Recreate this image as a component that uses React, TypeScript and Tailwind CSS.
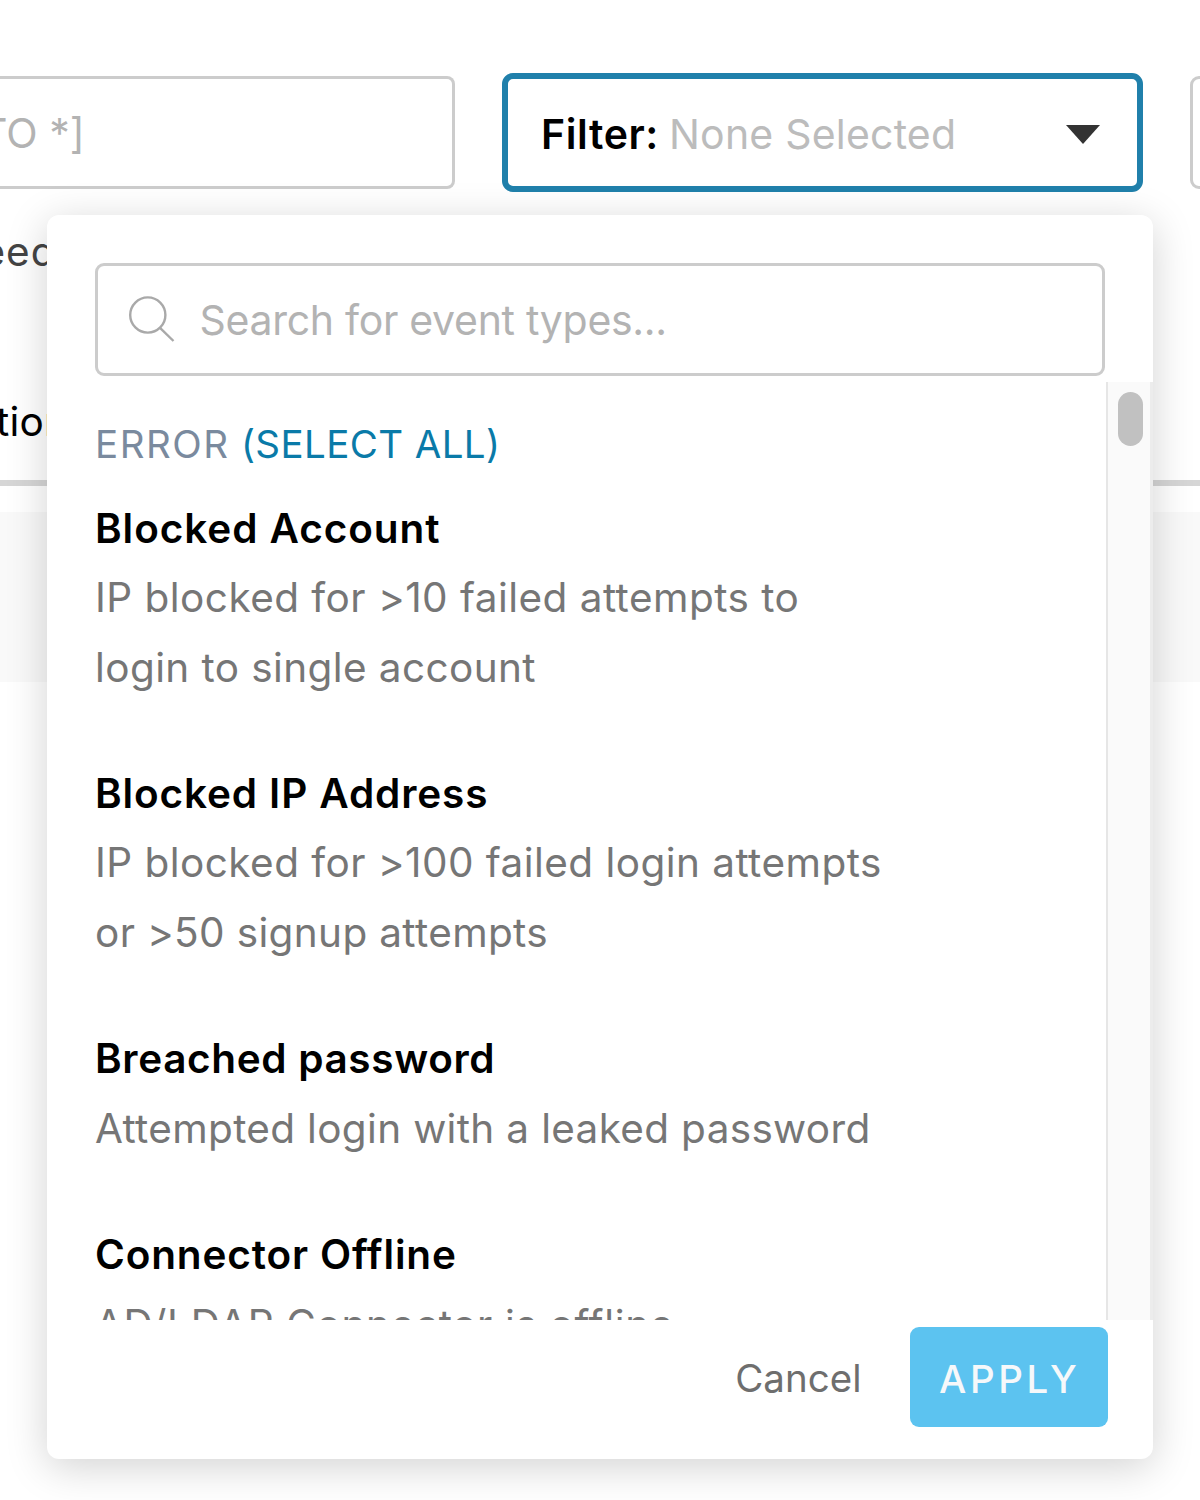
import React from "react";

type EventType = {
  name: string;
  nameTracking: string;
  lines: { text: string; tracking: string }[];
};

const EVENT_TYPES: EventType[] = [
  {
    name: "Blocked Account",
    nameTracking: "tracking-[0.92px]",
    lines: [
      { text: "IP blocked for >10 failed attempts to", tracking: "tracking-[0.46px]" },
      { text: "login to single account", tracking: "tracking-[0.4px]" },
    ],
  },
  {
    name: "Blocked IP Address",
    nameTracking: "tracking-[0.87px]",
    lines: [
      { text: "IP blocked for >100 failed login attempts", tracking: "tracking-[0.45px]" },
      { text: "or >50 signup attempts", tracking: "tracking-[0.35px]" },
    ],
  },
  {
    name: "Breached password",
    nameTracking: "tracking-[0.65px]",
    lines: [{ text: "Attempted login with a leaked password", tracking: "tracking-[0.33px]" }],
  },
  {
    name: "Connector Offline",
    nameTracking: "tracking-[0.85px]",
    lines: [{ text: "AD/LDAP Connector is offline", tracking: "tracking-[0.65px]" }],
  },
];

function SearchIcon() {
  return (
    <svg className="ml-[30px] mb-px size-[48px] shrink-0" viewBox="0 0 48 48" fill="none" stroke="#a9a9a9" strokeWidth="2.4">
      <circle cx="19.8" cy="20" r="17.6" />
      <path d="M32 32.8 45.5 46" />
    </svg>
  );
}

function Toolbar() {
  return (
    <div className="flex h-[119px] items-center">
      <div className="flex h-[113px] w-[455px] shrink-0 items-center rounded-r-[8px] border-[3px] border-l-0 border-[#cccccc] pt-[3px] text-[41px] text-[#b3b3b3]">
        <span className="-ml-[19px] whitespace-pre">TO *]</span>
      </div>
      <button className="ml-[47px] flex h-[119px] w-[641px] shrink-0 items-center rounded-[11px] border-[6px] border-[#2080ab] bg-white pt-[4px] pl-[33px] pr-[37px] text-[41px]">
        <span className="font-[560] tracking-[0.6px] text-black">Filter:</span>
        <span className="ml-[10px] tracking-[0.2px] text-[#bcbcbc]">None Selected</span>
        <svg className="mb-px ml-auto h-[19px] w-[34px]" viewBox="0 0 34 19" fill="#333">
          <path d="M0 0H34L17 19Z" />
        </svg>
      </button>
      <div className="ml-[47px] h-[113px] w-[60px] shrink-0 rounded-[9px] border-[3px] border-[#cccccc]" />
    </div>
  );
}

function EventRow({ event }: { event: EventType }) {
  return (
    <li className="mb-[56.6px] whitespace-nowrap text-[40.5px] leading-[69.6px]">
      <h3 className={`font-[560] text-black ${event.nameTracking}`}>{event.name}</h3>
      {event.lines.map((line) => (
        <p key={line.text} className="text-[#767676]">
          <span className={line.tracking}>{line.text}</span>
        </p>
      ))}
    </li>
  );
}

function FilterMenu() {
  return (
    <div className="absolute left-[47px] top-[214.5px] flex h-[1244px] w-[1105.5px] flex-col rounded-[12px] bg-white shadow-[0_8px_42px_rgba(0,0,0,0.18)]">
      <div className="mx-[48px] mt-[48px] flex h-[113px] shrink-0 items-center rounded-[9px] border-[3px] border-[#cccccc]">
        <SearchIcon />
        <span className="ml-[23.5px] mt-[3px] whitespace-nowrap text-[41px] tracking-[-0.3px] text-[#b3b3b3]">Search for event types...</span>
      </div>
      <div className="mt-[6.5px] flex h-[938px] shrink-0 overflow-hidden">
        <div className="w-[1059px] shrink-0 pl-[48px]">
          <div className="flex h-[111.5px] items-center whitespace-nowrap pt-[15px] text-[38.5px]">
            <span className="tracking-[1.5px] text-[#7a8a9e]">ERROR</span>
            <span className="ml-[11.5px] tracking-[0.4px] text-[#0a7aa8]">(SELECT ALL)</span>
          </div>
          <ul>
            {EVENT_TYPES.map((event) => (
              <EventRow key={event.name} event={event} />
            ))}
          </ul>
        </div>
        <div className="flex flex-1 justify-center border-l-[2px] border-r-[3px] border-l-[#e6e6e6] border-r-[#ececec] bg-[#fafafa] pt-[10px]">
          <div className="ml-[3px] h-[54px] w-[25px] rounded-[12.5px] bg-[#c1c1c1]" />
        </div>
      </div>
      <div className="mt-[7px] flex h-[100px] items-center justify-end pr-[44.5px]">
        <button className="mt-[4px] text-[38.5px] text-[#6e6e6e]">Cancel</button>
        <button className="ml-[48px] flex h-[100px] w-[198.5px] items-center justify-center rounded-[9px] bg-[#5cc3f0] pl-[2px] pt-[5px] text-[38.5px] font-medium tracking-[3.6px] text-[#f6f8fa]">
          APPLY
        </button>
      </div>
    </div>
  );
}

export default function App() {
  return (
    <div className="relative h-[1500px] w-[1200px] overflow-hidden bg-white pt-[73px] font-['Inter','Liberation_Sans',sans-serif]">
      <Toolbar />
      <div className="mt-[24px] h-[70px] whitespace-nowrap text-[40.5px] leading-[71px] text-[#444]">
        <span className="-ml-[18.5px] tracking-[1px]">eed</span>
      </div>
      <div className="mt-[100px] flex h-[100px] items-start border-b-[6px] border-[#d6d6d6] whitespace-nowrap text-[40.5px] leading-[72px] text-black">
        <span className="-ml-[4px] tracking-[0.2px]">tion</span>
      </div>
      <div className="mt-[26px] h-[170px] bg-[#f9f9f9]" />
      <FilterMenu />
    </div>
  );
}
